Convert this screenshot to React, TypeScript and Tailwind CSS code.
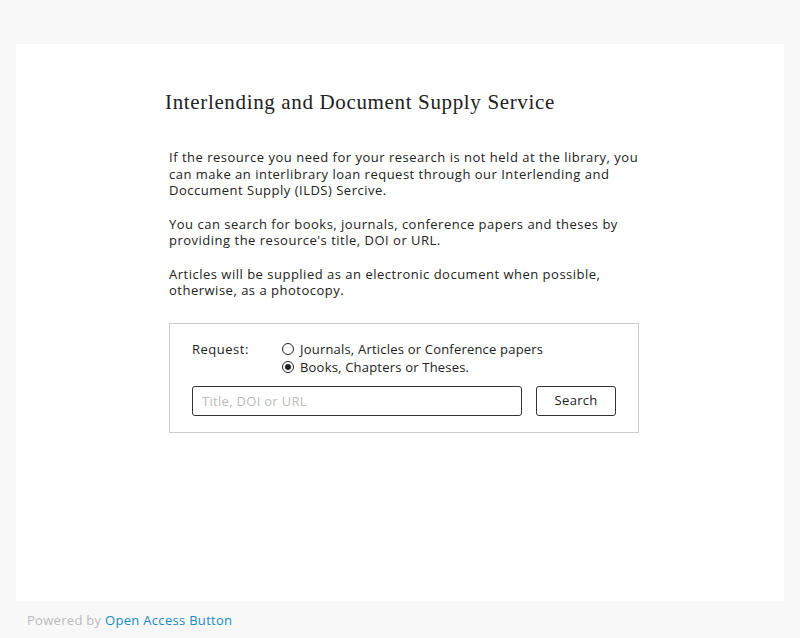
import React from "react";

export default function App() {
  const sans = { fontFamily: "'Open Sans', 'Noto Sans', sans-serif" };
  return (
    <div className="min-h-[638px] w-full bg-[#f8f8f8] flex flex-col" style={sans}>
      <div className="mx-4 mt-[44px] h-[557px] bg-white flex justify-center">
        <div className="w-[474px] pt-[45px] pl-[2px]">
          <h1
            className="text-[21px] leading-[26px] text-[#222] tracking-[0.65px]"
            style={{ fontFamily: "'Liberation Serif', 'DejaVu Serif', serif" }}
          >
            Interlending and Document Supply Service
          </h1>
          <div className="pl-1 mt-[34px] text-[13px] leading-[16.5px] text-[#222] tracking-[0.5px] whitespace-nowrap">
            <p>
              If the resource you need for your research is not held at the library, you<br />
              can make an interlibrary loan request through our Interlending and<br />
              Doccument Supply (ILDS) Sercive.
            </p>
            <p className="mt-[17px]">
              You can search for books, journals, conference papers and theses by<br />
              providing the resource's title, DOI or URL.
            </p>
            <p className="mt-[17px]">
              Articles will be supplied as an electronic document when possible,<br />
              otherwise, as a photocopy.
            </p>
            <div className="mt-[24px] w-[470px] border border-[#cccccc] px-[22px] pt-[17px] pb-[16px]">
              <div className="flex">
                <div className="w-[90px]">Request:</div>
                <div className="flex flex-col gap-[2px] tracking-[0.2px]">
                  <label className="flex items-center gap-[6px]">
                    <span className="w-[12px] h-[12px] rounded-full border border-[#222] inline-block" />
                    <span>Journals, Articles or Conference papers</span>
                  </label>
                  <label className="flex items-center gap-[6px]">
                    <span className="w-[12px] h-[12px] rounded-full border border-[#222] flex items-center justify-center">
                      <span className="w-[6px] h-[6px] rounded-full bg-[#222]" />
                    </span>
                    <span>Books, Chapters or Theses.</span>
                  </label>
                </div>
              </div>
              <div className="flex mt-[10px] gap-[14px]">
                <input
                  placeholder="Title, DOI or URL"
                  className="w-[331px] h-[30px] border border-[#333] rounded-[3px] px-[9px] text-[13px] tracking-[0.3px] placeholder:text-[#bbbbbb] outline-none"
                  style={sans}
                />
                <button className="w-[80px] h-[30px] border border-[#333] rounded-[3px] text-[13px] tracking-[0.3px] text-[#222] bg-white">
                  Search
                </button>
              </div>
            </div>
          </div>
        </div>
      </div>
      <div className="h-[40px] pl-[27px] flex items-center text-[13px] tracking-[0.3px]">
        <span className="text-[#bbbbbb]">Powered by&nbsp;</span>
        <span className="text-[#1a8ac0]">Open Access Button</span>
      </div>
    </div>
  );
}
